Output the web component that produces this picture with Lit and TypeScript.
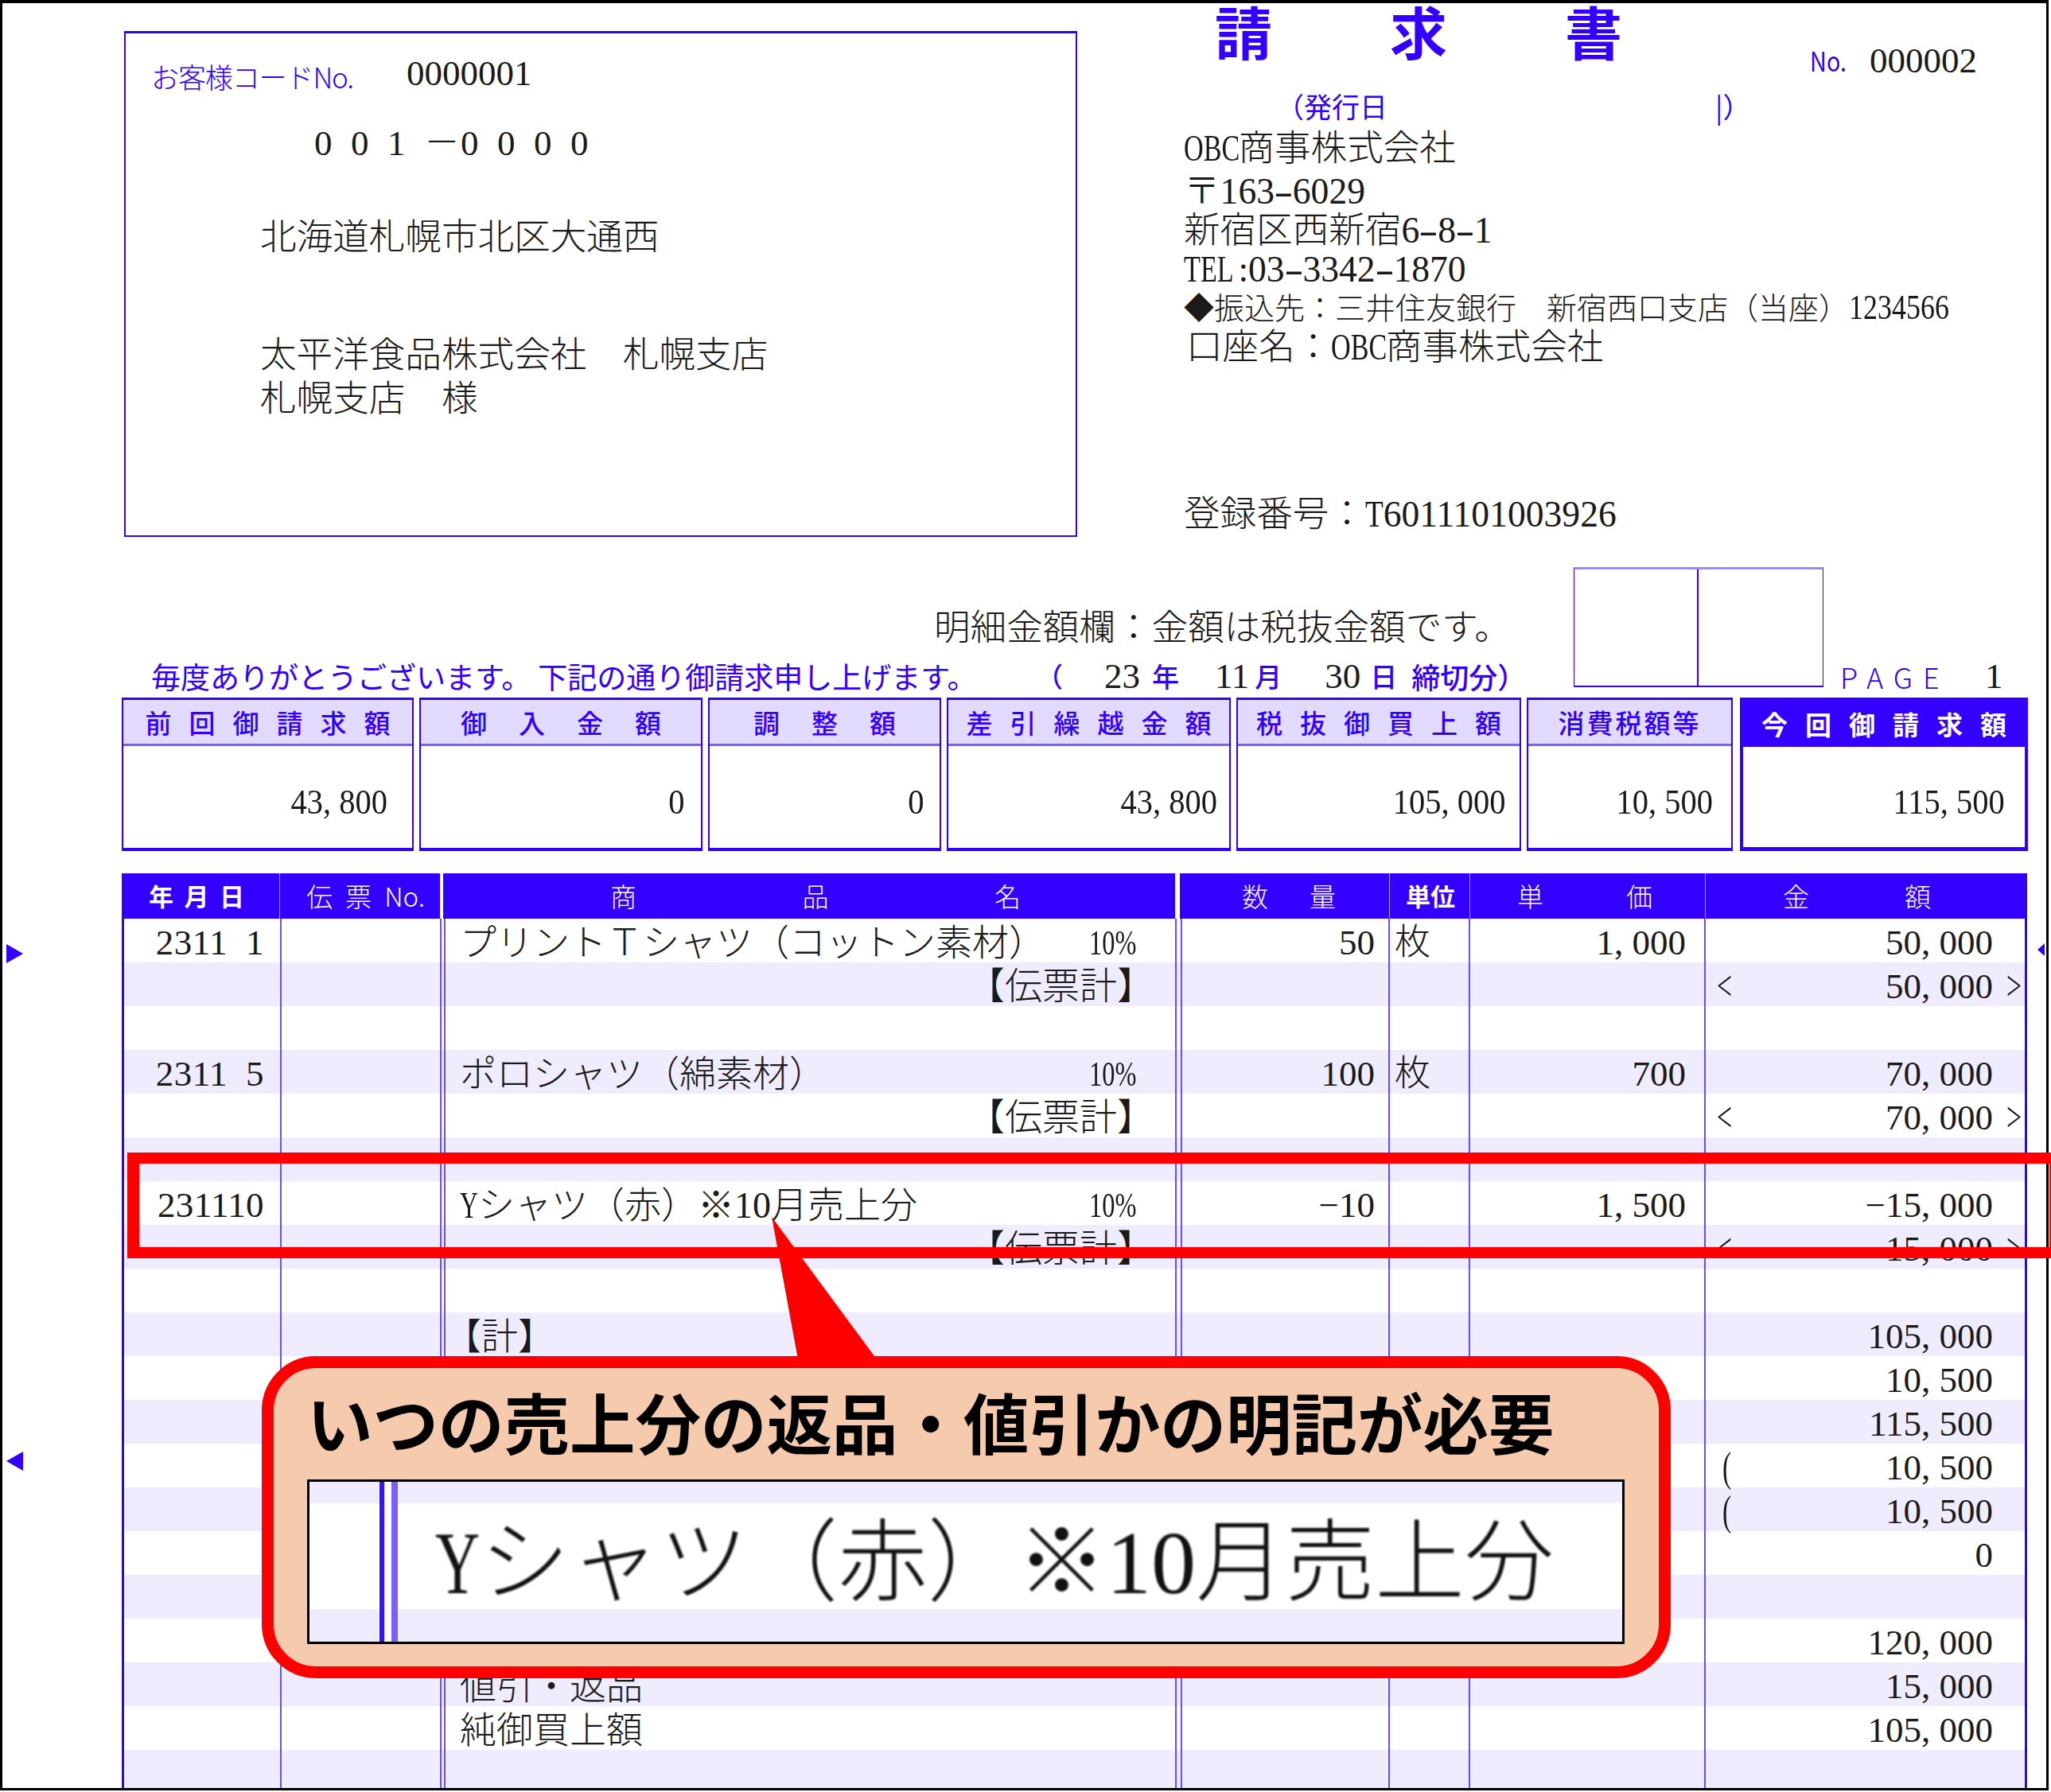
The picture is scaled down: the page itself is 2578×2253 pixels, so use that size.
import { LitElement, html, css } from "lit";
import { customElement } from "lit/decorators.js";

const hy = (s: string) => s.split("-").map((p, i) => (i ? html`<span class="hy">-</span>${p}` : p));

const cards = [
  { t: "前回御請求額", v: "43, 800", cls: "s22", pad: 31 },
  { t: "御入金額", v: "0", cls: "s40", pad: 21 },
  { t: "調整額", v: "0", cls: "s40", pad: 20 },
  { t: "差引繰越金額", v: "43, 800", cls: "s22", pad: 15 },
  { t: "税抜御買上額", v: "105, 000", cls: "s22", pad: 18 },
  { t: "消費税額等", v: "10, 500", cls: "s3", pad: 23 },
  { t: "今回御請求額", v: "115, 500", cls: "s22 now", pad: 25 },
];

const heads = [
  { c: ["年", "月", "日"], l: 34, r: 44, b: true, nob: false },
  { c: ["伝", "票", "No."], l: 33, r: 19, b: false, nob: true },
  null,
  { c: ["商", "品", "名"], l: 209, r: 194, b: false, nob: true },
  null,
  { c: ["数", "量"], l: 77, r: 67, b: false, nob: false },
  { c: ["単", "位"], l: 20, r: 18, b: true, nob: false },
  { c: ["単", "価"], l: 59, r: 66, b: false, nob: false },
  { c: ["金", "額"], l: 97, r: 121, b: false, nob: true },
];

type Row = { d?: string; n?: unknown; s?: string; q?: string; u?: string; p?: string; a?: string; l?: string; r?: string };
const rows: Row[] = [
  { d: "2311  1", n: "プリントＴシャツ（コットン素材）", s: "10%", q: "50", u: "枚", p: "1, 000", a: "50, 000" },
  { s: "【伝票計】", a: "50, 000", l: "<", r: ">" },
  {},
  { d: "2311  5", n: "ポロシャツ（綿素材）", s: "10%", q: "100", u: "枚", p: "700", a: "70, 000" },
  { s: "【伝票計】", a: "70, 000", l: "<", r: ">" },
  {},
  { d: "231110", n: html`<span class="yy">Y</span>シャツ（赤）※10月売上分`, s: "10%", q: "−10", p: "1, 500", a: "−15, 000" },
  { s: "【伝票計】", a: "−15, 000", l: "<", r: ">" },
  {},
  { n: "【計】", a: "105, 000" },
  { a: "10, 500" },
  { a: "115, 500" },
  { a: "10, 500", l: "(" },
  { a: "10, 500", l: "(" },
  { a: "0" },
  {},
  { a: "120, 000" },
  { n: "値引・返品", a: "15, 000" },
  { n: "純御買上額", a: "105, 000" },
  {},
];

const dateBits = [
  { t: "（", g: 0, c: "bl" },
  { t: "23", g: 52, c: "" },
  { t: "年", g: 15, c: "bl" },
  { t: "11", g: 45, c: "" },
  { t: "月", g: 7, c: "bl" },
  { t: "30", g: 54, c: "" },
  { t: "日", g: 12, c: "bl" },
  { t: "締切分）", g: 18, c: "bl wide" },
];

@customElement("app-root")
export class AppRoot extends LitElement {
  static styles = css`
    :host { display: block; width: 2578px; height: 2253px; position: relative; overflow: hidden; background: #fff;
      font-family: "Liberation Serif", "Noto Sans CJK JP", serif; font-weight: 300; color: #1a1a1a; font-size: 45px; }
    * { box-sizing: border-box; }
    .frame { width: 2575px; height: 2251px; border: 3px solid #000; border-top-width: 4px; overflow: hidden; background: #fff; }
    .bl { color: #3300ff; }
    .go { font-family: "Noto Sans CJK JP", sans-serif; }
    .top { display: grid; grid-template-columns: 1198px 1fr; margin-left: 153px; height: 671px; }
    .addr { margin-top: 35px; height: 636px; border: 2px solid #3300ff; border-top-width: 3px; padding-top: 25px; }
    .addr div { height: 50px; line-height: 50px; white-space: nowrap; }
    .code { display: flex; padding-left: 32px; }
    .code .lbl { width: 321px; font-size: 35px; margin-top: 4px; letter-spacing: -1.1px; }
    .zip { display: flex; padding-left: 237px; margin-top: 38px; }
    .zip span { width: 46px; }
    .a1, .a2, .a3 { padding-left: 169px; font-size: 45.6px; }
    .a1 { margin-top: 69px; }
    .a2 { margin-top: 98px; }
    .a3 { margin-top: 5px; }
    .right { margin-left: 134px; }
    .head { display: flex; height: 110px; white-space: nowrap; }
    .title { width: 787px; padding-left: 39px; font-size: 72px; line-height: 68px; height: 74px; font-weight: 700; letter-spacing: 148px; color: #3300ff; font-family: "Noto Sans CJK JP", sans-serif; }
    .no { margin-top: 50px; height: 44px; line-height: 44px; display: flex; }
    .no b { font-weight: 400; font-size: 34px; width: 75px; transform: scaleX(.85); transform-origin: left; }
    .issued { display: flex; height: 38px; line-height: 38px; font-size: 35px; padding-left: 116px; color: #3300ff; font-weight: 400; }
    .issued .l { width: 552px; font-family: "Noto Sans CJK JP", sans-serif; }
    .iss div { height: 50px; line-height: 50px; white-space: nowrap; font-size: 45.6px; }
    .iss div:nth-child(1) { margin-top: 10px; }
    .iss div:nth-child(2) { margin-top: 4px; }
    .iss div:nth-child(3) { margin-top: -1px; }
    .iss div:nth-child(4) { margin-top: -1px; }
    .iss div:nth-child(5) { margin-top: -3px; font-size: 38px; }
    .iss div:nth-child(6) { margin-top: 1px; padding-left: 3px; }
    .iss div:nth-child(7) { margin-top: 160px; }
    .digits7 { display: inline-block; width: 126px; font-size: 45px; transform: scaleX(.8); transform-origin: left; }
    .hy { display: inline-block; width: .5em; text-align: center; transform: scaleX(1.6); }
    .lat { display: inline-block; width: 1.5em; transform: scaleX(.75); transform-origin: left; }
    .lat1 { display: inline-block; width: .5em; transform: scaleX(.82); transform-origin: left; }
    .mid { display: grid; grid-template-columns: 1825px 314px 1fr; height: 202px; margin-left: 150px; }
    .notes { display: flex; flex-direction: column; justify-content: flex-end; padding-bottom: 2px; gap: 10px; }
    .notice { height: 50px; line-height: 50px; margin-left: 1021px; font-size: 45.6px; white-space: nowrap; }
    .greet { height: 50px; line-height: 50px; display: flex; padding-left: 37px; white-space: nowrap; }
    .thanks { width: 1112px; font-size: 37px; font-weight: 400; color: #3300ff; }
    .thanks span { margin-left: 9px; }
    .date { display: flex; }
    .date .bl { font-size: 34px; font-weight: 500; font-family: "Noto Sans CJK JP", sans-serif; }
    .date .wide { font-size: 36px; }
    .stamp { margin-top: 38px; height: 151px; display: grid; grid-template-columns: 1fr 1fr; border: 1.5px solid #3300ff; border-top: 3px solid #9a85ff; border-bottom-width: 2px; }
    .stamp i:first-child { border-right: 2px solid #3300ff; }
    .page { display: flex; align-items: flex-end; height: 202px; padding-bottom: 2px; padding-left: 21px; white-space: nowrap; }
    .page div { height: 50px; line-height: 50px; }
    .page .p { width: 182px; font-family: "Noto Sans CJK JP", sans-serif; font-size: 36px; font-weight: 300; letter-spacing: 13px; color: #3300ff; }
    .cards { display: grid; grid-template-columns: 367px 356px 293px 357px 358px 259px 364px; gap: 7px; margin-left: 150px; height: 193px; }
    .card { border: 2px solid #3300ff; border-top-width: 3px; border-bottom-width: 4px; display: flex; flex-direction: column; }
    .chead { height: 58px; flex: none; background: #e3dbff; border-bottom: 3px solid #7a5fff; color: #3300ff; display: flex; align-items: center; justify-content: center;
      font-size: 33px; font-weight: 500; font-family: "Noto Sans CJK JP", sans-serif; white-space: nowrap; }
    .s22 .chead { letter-spacing: 22px; padding-left: 22px; }
    .s40 .chead { letter-spacing: 40px; padding-left: 40px; }
    .s3 .chead { letter-spacing: 3px; }
    .cval { flex: 1; display: flex; align-items: center; justify-content: flex-end; padding-top: 12px; }
    .card.now { border-width: 4px; margin-left: 2px; border-bottom-width: 5px; }
    .now .chead { background: #3300ff; color: #fff; font-weight: 700; border-bottom: none; }
    .sq { display: inline-block; transform: scaleX(.9); transform-origin: right; white-space: pre; }
    .table { margin-top: 28px; margin-left: 150px; width: 2395px; }
    .thead { display: grid; grid-template-columns: 199px 201px 5px 919px 7px 263px 101px 296px 404px; height: 57px; background: #3300ff; color: #fff; font-size: 33px; font-family: "Noto Sans CJK JP", sans-serif; }
    .th { display: flex; justify-content: space-between; align-items: center; white-space: nowrap; border-right: 1.5px solid #b9a9ff; padding-bottom: 2px; }
    .th.nob { border-right: 0; }
    .th.b { font-weight: 700; font-size: 31px; }
    .gapc { background: #fff; margin-right: 1px; }
    .row { display: grid; grid-template-columns: 198px 201px 3px 921px 5px 263px 101px 296px 1fr; height: 55px; line-height: 61px; border-left: 3px solid #3300ff; border-right: 3.5px solid #3300ff; white-space: nowrap; }
    .row.st { background: #f0ecff; }
    .c { border-right: 2px solid #6a4dff; }
    .c.n { display: flex; justify-content: space-between; padding: 0 49px 0 18px; border-left: 2px solid #6a4dff; font-size: 46px; }
    .c.dbl { border: 0; }
    .c.r { text-align: right; white-space: pre; }
    .c.dt { padding-right: 20px; letter-spacing: .4px; }
    .c.qty { padding-right: 17px; border-left: 2px solid #6a4dff; }
    .c.unit { padding-left: 6px; }
    .c.price { padding-right: 23px; }
    .c.amt { display: grid; grid-template-columns: 1fr auto 40px; padding-left: 14px; border-right: 0; }
    .amt .m { display: inline-block; }
    .lb { transform: scale(.75, 1.15); transform-origin: left center; }
    .lb.par { margin-left: 7px; }
    .rb { transform: scale(.75, 1.15); transform-origin: left center; margin-left: 17px; }
    .pct { display: inline-block; width: 61px; font-size: 45px; }
    .pct span { display: inline-block; transform: scaleX(.72); transform-origin: right; float: right; }
    .tot { font-size: 47px; margin-right: -23px; }
    .brk { margin-left: -19px; }
    .mark { position: absolute; width: 0; height: 0; border-style: solid; border-color: transparent; }
    .m1 { left: 8px; top: 1187px; border-width: 12px 0 12px 21px; border-left-color: #3300ff; }
    .m2 { left: 8px; top: 1825px; border-width: 12px 21px 12px 0; border-right-color: #3300ff; }
    .m3 { left: 2561px; top: 1186px; border-width: 8px 9px 8px 0; border-right-color: #3300ff; }
    .redbox { position: absolute; left: 160px; top: 1449px; width: 2430px; height: 133px; border: 14px solid #ff0000; border-left-width: 15px; }
    .tail { position: absolute; left: 960px; top: 1525px; width: 160px; height: 195px; }
    .tail polygon { fill: #ff0000; }
    .callout { position: absolute; left: 329px; top: 1705px; width: 1771px; height: 405px; border: 15px solid #ff0000; border-radius: 68px; background: #f6caac; padding: 0 42px; }
    .ctitle { height: 140px; line-height: 132px; font-size: 82.5px; font-weight: 700; color: #000; font-family: "Noto Sans CJK JP", sans-serif; white-space: nowrap; }
    .inset { height: 207px; width: 1656px; border: 3px solid #000; background: linear-gradient(#f0ecff 0 27px, #fff 27px 160px, #f0ecff 160px); display: flex; overflow: hidden; }
    .inset .pre { width: 94px; flex: none; height: 100%; border-right: 6px solid #3a10ff; }
    .inset .gap { width: 17px; flex: none; height: 100%; background: #fff; border-right: 8px solid #7a5fff; }
    .inset .big { margin-left: 47px; line-height: 204px; font-size: 112.5px; white-space: nowrap; color: #111; filter: blur(.8px); }
    .yy { display: inline-block; width: .5em; transform: scaleX(.69); transform-origin: left; }
  `;

  render() {
    return html`
      <div class="frame">
        <section class="top">
          <div class="addr">
            <div class="code"><span class="lbl bl go">お客様コードNo.</span><span>0000001</span></div>
            <div class="zip">${[..."001－0000"].map((c) => html`<span>${c}</span>`)}</div>
            <div class="a1">北海道札幌市北区大通西</div>
            <div class="a2">太平洋食品株式会社　札幌支店</div>
            <div class="a3">札幌支店　様</div>
          </div>
          <div class="right">
            <div class="head">
              <div class="title">請求書</div>
              <div class="no"><b class="bl go">No.</b><span>000002</span></div>
            </div>
            <div class="issued"><span class="l">（発行日</span><span class="go">|）</span></div>
            <div class="iss">
              <div><span class="lat">OBC</span>商事株式会社</div>
              <div>〒${hy("163-6029")}</div>
              <div>新宿区西新宿${hy("6-8-1")}</div>
              <div><span class="lat">TEL</span>:${hy("03-3342-1870")}</div>
              <div>◆振込先：三井住友銀行　新宿西口支店（当座）<span class="digits7">1234566</span></div>
              <div>口座名：<span class="lat">OBC</span>商事株式会社</div>
              <div>登録番号：<span class="lat1">T</span>6011101003926</div>
            </div>
          </div>
        </section>

        <section class="mid">
          <div class="notes">
            <div class="notice">明細金額欄：金額は税抜金額です。</div>
            <div class="greet">
              <div class="thanks go">毎度ありがとうございます。<span>下記の通り御請求申し上げます。</span></div>
              <div class="date">
                ${dateBits.map((b) => html`<span class=${b.c} style="margin-left:${b.g}px">${b.t}</span>`)}
              </div>
            </div>
          </div>
          <div class="stamp"><i></i><i></i></div>
          <div class="page"><div class="p">PAGE</div><div>1</div></div>
        </section>

        <section class="cards">
          ${cards.map(
            (c) => html`<div class="card ${c.cls}">
              <div class="chead">${c.t}</div>
              <div class="cval" style="padding-right:${c.pad}px"><span class="sq">${c.v}</span></div>
            </div>`
          )}
        </section>

        <section class="table">
          <div class="thead">
            ${heads.map((h) =>
              h
                ? html`<div class="th ${h.b ? "b" : ""} ${h.nob ? "nob" : ""}" style="padding-left:${h.l}px;padding-right:${h.r}px">
                    ${h.c.map((x) => html`<span>${x}</span>`)}
                  </div>`
                : html`<div class="gapc"></div>`
            )}
          </div>
          ${rows.map(
            (r, i) => html`<div class="row ${i % 2 ? "st" : ""}">
              <div class="c r dt">${r.d ?? ""}</div>
              <div class="c"></div>
              <div class="c dbl"></div>
              <div class="c n">
                <span class=${r.n === "【計】" ? "brk" : ""}>${r.n ?? ""}</span>
                ${r.s === "10%"
                  ? html`<span class="pct"><span>10%</span></span>`
                  : html`<span class="tot">${r.s ?? ""}</span>`}
              </div>
              <div class="c dbl"></div>
              <div class="c r qty">${r.q ?? ""}</div>
              <div class="c unit">${r.u ?? ""}</div>
              <div class="c r price">${r.p ?? ""}</div>
              <div class="c amt">
                <span class="m lb ${r.l === "(" ? "par" : ""}">${r.l ?? ""}</span>
                <span>${r.a ?? ""}</span>
                <span class="m rb">${r.r ?? ""}</span>
              </div>
            </div>`
          )}
        </section>
      </div>

      <i class="mark m1"></i>
      <i class="mark m2"></i>
      <i class="mark m3"></i>
      <div class="redbox"></div>
      <svg class="tail" viewBox="0 0 160 195"><polygon points="10,5 45,195 150,195"></polygon></svg>
      <div class="callout">
        <div class="ctitle">いつの売上分の返品・値引かの明記が必要</div>
        <div class="inset">
          <div class="pre"></div>
          <div class="gap"></div>
          <div class="big"><span class="yy">Y</span>シャツ（赤）※10月売上分</div>
        </div>
      </div>
    `;
  }
}
